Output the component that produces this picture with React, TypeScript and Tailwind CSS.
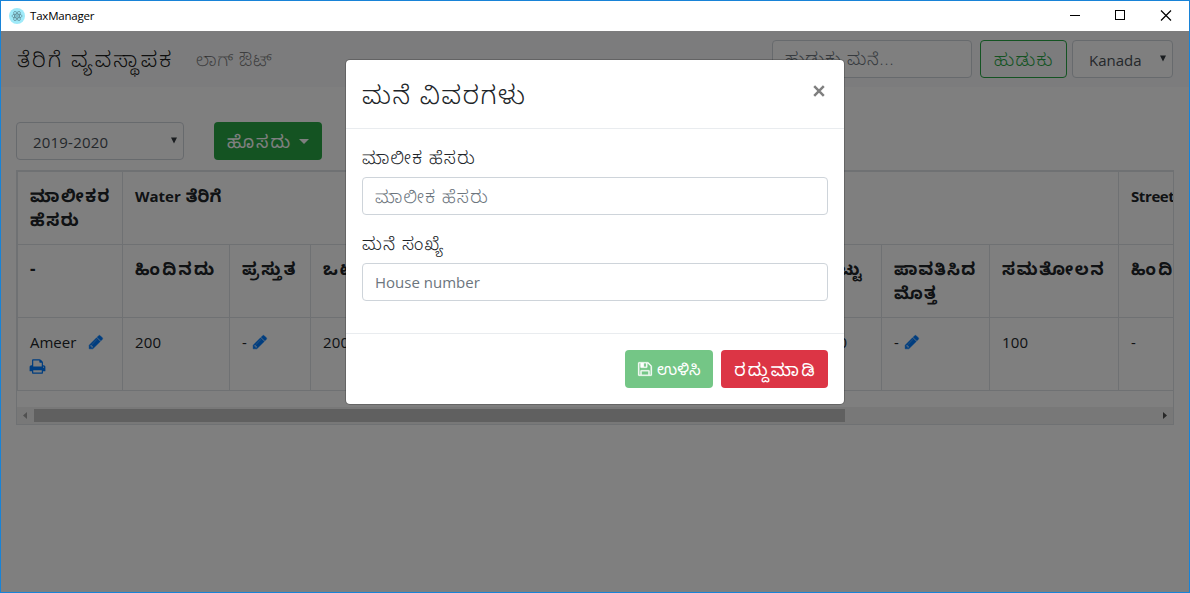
import React from "react";

type IconProps = { className?: string };

const PencilIcon = ({ className = "" }: IconProps) => (
  <svg viewBox="0 0 1792 1792" className={`inline-block size-4 shrink-0 fill-[#007bff] stroke-[#007bff] ${className}`} strokeWidth="50">
    <path d="M491 1536l91-91-235-235-91 91v107h128v128h107zm523-928q0-22-22-22-10 0-17 7l-542 542q-7 7-7 17 0 22 22 22 10 0 17-7l542-542q7-7 7-17zm-54-192l416 416-832 832h-416v-416zm683 96q0 53-37 90l-166 166-416-416 166-165q36-38 90-38 53 0 91 38l235 234q37 39 37 91z" />
  </svg>
);

const PrintIcon = () => (
  <svg viewBox="0 0 1792 1792" className="-ml-px size-[17px] fill-[#007bff]">
    <path d="M448 1536h896v-256h-896v256zm0-640h896v-384h-160q-40 0-68-28t-28-68v-160h-640v640zm1152 64q0-26-19-45t-45-19-45 19-19 45 19 45 45 19 45-19 19-45zm128 0v416q0 13-9.5 22.5t-22.5 9.5h-224v160q0 40-28 68t-68 28h-960q-40 0-68-28t-28-68v-160h-224q-13 0-22.5-9.5t-9.5-22.5v-416q0-79 56.5-135.5t135.5-56.5h64v-544q0-40 28-68t68-28h672q40 0 88 20t76 48l152 152q28 28 48 76t20 88v256h64q79 0 135.5 56.5t56.5 135.5z" />
  </svg>
);

const SaveIcon = () => (
  <svg viewBox="0 0 1792 1792" className="size-4 shrink-0 fill-white stroke-white" strokeWidth="30">
    <path d="M512 1536h768v-384h-768v384zm896 0h128v-896q0-14-10-38.5t-20-34.5l-281-281q-10-10-34-20t-39-10v416q0 40-28 68t-68 28h-576q-40 0-68-28t-28-68v-416h-128v1280h128v-416q0-40 28-68t68-28h832q40 0 68 28t28 68v416zm-384-928v-320q0-13-9.5-22.5t-22.5-9.5h-192q-13 0-22.5 9.5t-9.5 22.5v320q0 13 9.5 22.5t22.5 9.5h192q13 0 22.5-9.5t9.5-22.5zm640 32v928q0 40-28 68t-68 28h-1344q-40 0-68-28t-28-68v-1344q0-40 28-68t68-28h928q40 0 88 20t76 48l280 280q28 28 48 76t20 88z" />
  </svg>
);

const AppIcon = () => (
  <svg viewBox="0 0 16 16" className="size-4" fill="none">
    <circle cx="8" cy="8" r="8" fill="#9feaf9" />
    <g stroke="#5d8791" strokeWidth="0.7">
      <ellipse cx="8" cy="8" rx="5.2" ry="2" />
      <ellipse cx="8" cy="8" rx="5.2" ry="2" transform="rotate(60 8 8)" />
      <ellipse cx="8" cy="8" rx="5.2" ry="2" transform="rotate(120 8 8)" />
    </g>
    <circle cx="8" cy="8" r="0.8" fill="#47848f" />
  </svg>
);

const TitleBar = () => (
  <div className="flex h-[30px] items-center bg-white pl-2">
    <AppIcon />
    <span className="ml-[5px] font-['Open_Sans'] text-[11.5px] tracking-[-0.2px] text-black">TaxManager</span>
    <div className="ml-auto flex">
      <svg width="46" height="30" viewBox="0 0 46 30" stroke="#000" fill="none" shapeRendering="crispEdges">
        <path d="M18 14.5h10" />
      </svg>
      <svg width="45" height="30" viewBox="0 0 45 30" stroke="#000" fill="none" shapeRendering="crispEdges">
        <path d="M17.500 9.500h9v9h-9z" />
      </svg>
      <svg width="46" height="30" viewBox="0 0 46 30" stroke="#000" strokeWidth="1.200" fill="none">
        <path d="M18 9.500l10 10M28 9.500l-10 10" />
      </svg>
    </div>
  </div>
);

const Arrow = ({ className = "" }: IconProps) => (
  <svg width="6" height="7" viewBox="0 0 6 7" className={className}>
    <path d="M0 0.500h6l-3 6z" fill="#343a40" />
  </svg>
);

const NavBar = () => (
  <nav className="flex h-14 items-center bg-[#f8f9fa] pr-4 pl-4">
    <span className="w-[179px] text-[21.5px] font-light tracking-[2.1px] whitespace-nowrap text-black/90">ತೆರಿಗೆ ವ್ಯವಸ್ಥಾಪಕ</span>
    <span className="text-[17.5px] font-light tracking-[0.7px] text-black/50">ಲಾಗ್ ಔಟ್</span>
    <div className="ml-auto flex h-[38px] w-[200px] items-center rounded border border-[#ced4da] bg-white pl-3 text-[17px] font-light tracking-[0.9px] text-[#6c757d]">
      ಹುಡುಕು ಮನೆ...
    </div>
    <button className="ml-2 h-[38px] w-[87px] rounded border border-[#28a745] pl-px text-[17.5px] font-light tracking-[1.5px] whitespace-nowrap text-[#28a745]">ಹುಡುಕು</button>
    <div className="ml-[5px] flex h-[38px] w-[101px] items-center justify-between rounded border border-[#ced4da] bg-white pt-[3px] pr-[6px] pl-4 text-[#495057]">
      Kanada
      <Arrow className="mb-[5px]" />
    </div>
  </nav>
);

const previous = { text: "ಹಿಂದಿನದು", tracking: "tracking-[2.4px]" };
const current = { text: "ಪ್ರಸ್ತುತ", tracking: "tracking-[2.4px]" };
const total = { text: "ಒಟ್ಟು", tracking: "tracking-[2px]" };
const paid = { text: "ಪಾವತಿಸಿದ ಮೊತ್ತ", tracking: "tracking-[1.2px]" };
const balance = { text: "ಸಮತೋಲನ", tracking: "tracking-[1.7px]" };
const dash = { text: "-", tracking: "" };
const subHeaders = [dash, previous, current, total, paid, balance, previous, current, total, paid, balance, previous];

const amounts = [
  { text: "200" },
  { text: "-", edit: true },
  { text: "200" },
  { text: "-", edit: true },
  { text: "200" },
  { text: "100" },
  { text: "-", edit: true },
  { text: "100" },
  { text: "-", edit: true },
  { text: "100" },
  { text: "-" },
];

const cell = "h-[73px] border-t border-l border-[#dee2e6] px-3 py-3 leading-6";

const GroupHeader = ({ name }: { name: string }) => (
  <>
    <span className="text-[15px]">{name}</span>{" "}
    <span className="ml-px text-[17px] tracking-[0.2px]">ತೆರಿಗೆ</span>
  </>
);

const TaxTable = () => (
  <div className="mt-[10px] h-[255px] w-[1158px] overflow-hidden border border-[#dee2e6]">
    <div className="grid w-[1208px] grid-cols-[105px_107px_81px_73px_108px_129px_107px_81px_73px_108px_129px_107px] border-b border-[#dee2e6]">
      <div className={`${cell} text-[17px] font-bold tracking-[1.5px]`}>ಮಾಲೀಕರ ಹೆಸರು</div>
      <div className={`${cell} col-span-5 font-bold`}><GroupHeader name="Water" /></div>
      <div className={`${cell} col-span-5 font-bold`}><GroupHeader name="House" /></div>
      <div className={`${cell} font-bold tracking-[-0.4px] whitespace-nowrap`}><GroupHeader name="Street" /></div>
      {subHeaders.map((h, i) => (
        <div key={i} className={`${cell} text-[17px] font-bold ${h.tracking}`}>{h.text}</div>
      ))}
      <div className={cell}>
        <div className="flex h-6 items-center">
          <span className="w-[58px]">Ameer</span>
          <PencilIcon />
        </div>
        <div className="flex h-6 items-center">
          <PrintIcon />
        </div>
      </div>
      {amounts.map((a, i) => (
        <div key={i} className={cell}>
          <div className="flex h-6 items-center tracking-[0.2px]">
            {a.text}
            {a.edit && <PencilIcon className="ml-[5px]" />}
          </div>
        </div>
      ))}
    </div>
    <div className="mt-4 flex h-[17px] items-center bg-[#f1f1f1]">
      <svg width="17" height="17" viewBox="0 0 17 17" className="shrink-0">
        <path d="M10 5v7l-4-3.500z" fill="#a3a3a3" />
      </svg>
      <div className="h-[13px] w-[811px] bg-[#c1c1c1]" />
      <svg width="17" height="17" viewBox="0 0 17 17" className="ml-auto">
        <path d="M7 5v7l4-3.500z" fill="#505050" />
      </svg>
    </div>
  </div>
);

const HouseDialog = () => (
  <div className="flex h-[346px] w-[500px] flex-col rounded-[5px] border border-black/20 bg-white bg-clip-padding">
    <div className="flex h-[69px] shrink-0 items-start justify-between border-b border-[#e9ecef] px-4 pt-4">
      <h4 className="text-[25.5px] leading-9 font-light tracking-[1.6px]">ಮನೆ ವಿವರಗಳು</h4>
      <svg width="12" height="12" viewBox="0 0 12 12" className="mt-[9px] mr-[3px]">
        <path d="M1.200 1.200l9.600 9.600M10.800 1.200l-9.600 9.600" stroke="#7f7f7f" strokeWidth="2.500" />
      </svg>
    </div>
    <div className="grow px-4 pt-4">
      <div className="mb-2 h-6 text-[17.5px] leading-6 font-light tracking-[1.3px]">ಮಾಲೀಕ ಹೆಸರು</div>
      <div className="mb-4 flex h-[38px] items-center rounded border border-[#ced4da] pl-3 text-[17.5px] font-light tracking-[1.3px] text-[#6c757d]">
        ಮಾಲೀಕ ಹೆಸರು
      </div>
      <div className="mb-2 h-6 text-[17.5px] leading-6 font-light tracking-[1.2px]">ಮನೆ ಸಂಖ್ಯೆ</div>
      <div className="flex h-[38px] items-center rounded border border-[#ced4da] pl-3 text-[#6c757d]">House number</div>
    </div>
    <div className="flex h-[71px] shrink-0 items-center justify-end gap-2 border-t border-[#e9ecef] px-4">
      <button className="flex h-[38px] w-[88px] items-center gap-1 rounded bg-[#74c686] pl-3 text-[16.5px] whitespace-nowrap text-white">
        <SaveIcon />
        ಉಳಿಸಿ
      </button>
      <button className="h-[38px] w-[107px] rounded bg-[#dc3545] pl-[2px] text-[17.5px] tracking-[2.2px] whitespace-nowrap text-white">ರದ್ದುಮಾಡಿ</button>
    </div>
  </div>
);

export default function App() {
  return (
    <div className="flex h-[593px] w-[1190px] flex-col overflow-hidden border border-[#1883d7] font-['Open_Sans','Noto_Sans_Kannada',sans-serif] text-[15px] text-[#212529]">
      <TitleBar />
      <div className="relative grow bg-white">
        <NavBar />
        <main className="pt-[35px] pl-[15px]">
          <div className="flex">
            <div className="flex h-[38px] w-[168px] items-center justify-between rounded border border-[#ced4da] bg-white pt-[3px] pr-[6px] pl-4 tracking-[0.2px] text-[#495057]">
              2019-2020
              <Arrow className="mb-[5px]" />
            </div>
            <button className="ml-[30px] flex h-[38px] w-[108px] items-center justify-between rounded bg-[#28a745] px-[13px] text-[17.5px] tracking-[2px] whitespace-nowrap text-white">
              ಹೊಸದು
              <svg width="10" height="5" viewBox="0 0 10 5">
                <path d="M0 0h10l-5 5z" fill="#fff" />
              </svg>
            </button>
          </div>
          <TaxTable />
        </main>
        <div className="absolute inset-0 flex items-start justify-center bg-black/50 pt-7">
          <HouseDialog />
        </div>
      </div>
    </div>
  );
}
